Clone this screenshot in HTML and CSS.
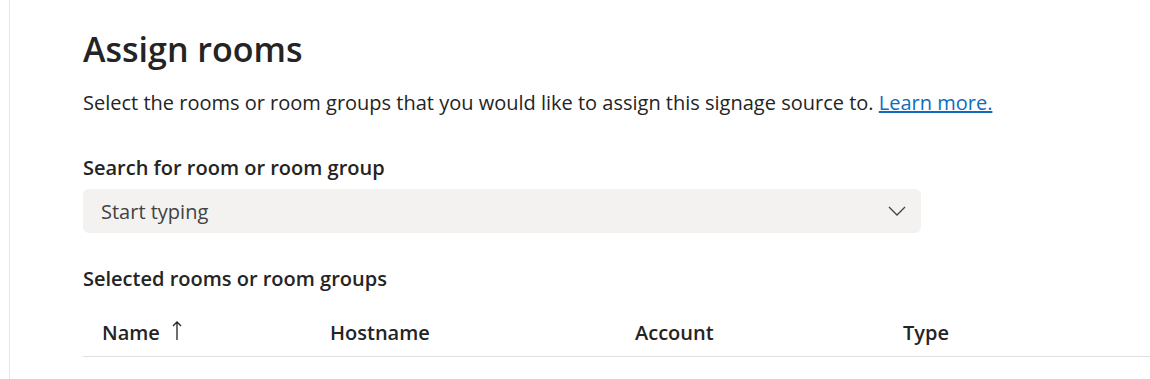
FILE: index.html
```html
<!DOCTYPE html>
<html lang="en">
<head>
<meta charset="utf-8">
<title>Assign rooms</title>
<link rel="stylesheet" href="styles.css">
</head>
<body>
<div class="panel">
  <main class="content">
    <h1 class="title">Assign rooms</h1>
    <p class="desc">Select the rooms or room groups that you would like to assign this signage source to. <a href="#" class="link">Learn more.</a></p>
    <div class="field">
      <label class="label">Search for room or room group</label>
      <div class="combo">
        <span class="placeholder">Start typing</span>
        <svg class="chevron" width="18" height="10" viewBox="0 0 18 10"><path d="M1 1 L9 9 L17 1" fill="none" stroke="#424242" stroke-width="1.3"/></svg>
      </div>
    </div>
    <div class="label selected">Selected rooms or room groups</div>
    <div class="table-head">
      <div class="th col-name">Name <svg class="sort" width="10" height="20" viewBox="0 0 10 20"><path d="M5 1 V19 M1 5 L5 1 L9 5" fill="none" stroke="#242424" stroke-width="1.3"/></svg></div>
      <div class="th col-host">Hostname</div>
      <div class="th col-acct">Account</div>
      <div class="th col-type">Type</div>
    </div>
  </main>
</div>
</body>
</html>
```

FILE: styles.css
```css
html, body {
  margin: 0;
  padding: 0;
  background: #ffffff;
  height: 100%;
}
body {
  font-family: "Open Sans", "Noto Sans", sans-serif;
  color: #242424;
}
.panel {
  margin-left: 9px;
  border-left: 1px solid #e6e6e6;
  min-height: 100%;
  box-sizing: border-box;
}
.content {
  padding: 24px 0 0 73px;
}
.title {
  margin: 0;
  font-size: 34px;
  font-weight: 600;
  line-height: 50px;
  color: #242424;
}
.desc {
  margin: 15px 0 0 0;
  font-size: 20px;
  line-height: 28px;
  color: #242424;
}
.link {
  color: #0f6cbd;
  text-decoration: underline;
}
.field {
  margin-top: 37px;
  width: 838px;
}
.label {
  display: block;
  font-size: 20px;
  font-weight: 600;
  line-height: 28px;
  color: #242424;
}
.combo {
  margin-top: 7px;
  height: 44px;
  background: #f3f2f1;
  border-radius: 6px;
  display: flex;
  align-items: center;
  justify-content: space-between;
  padding: 0 15px 0 18px;
}
.placeholder {
  font-size: 20px;
  color: #424242;
}
.selected {
  margin-top: 32px;
}
.table-head {
  margin-top: 26px;
  display: grid;
  grid-template-columns: 228px 305px 268px 1fr;
  border-bottom: 1px solid #e1dfdd;
  height: 37px;
  align-items: start;
}
.th {
  font-size: 20px;
  font-weight: 600;
  line-height: 28px;
  padding-left: 19px;
  color: #242424;
  display: flex;
  align-items: center;
}
.sort {
  margin-left: 12px;
  margin-top: -4px;
}
```
